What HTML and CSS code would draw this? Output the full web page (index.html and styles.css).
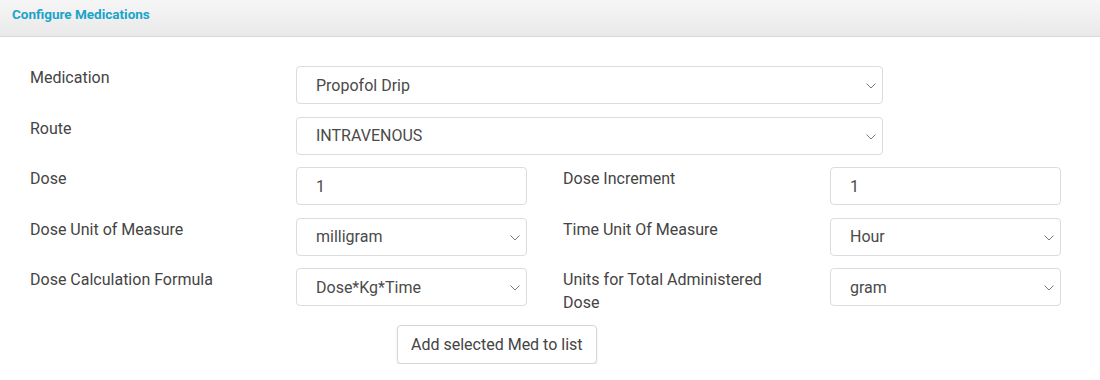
FILE: index.html
```html
<!DOCTYPE html>
<html lang="en">
  <head>
    <meta charset="UTF-8" />
    <meta name="viewport" content="width=device-width, initial-scale=1.0" />
    <title>Configure Medications</title>
    <link rel="stylesheet" href="styles.css">
  </head>
  <body>
    <div class="panel-header">
      <h1>Configure Medications</h1>
    </div>
    <form class="med-form">
      <div class="form-grid">
        <label class="field-label">Medication</label>
        <div class="select-wrap wide">
          <select>
            <option>Propofol Drip</option>
          </select>
          <svg class="chevron" viewBox="0 0 10 6"><path d="M0.5 0.5 L5 5 L9.5 0.5" /></svg>
        </div>

        <label class="field-label">Route</label>
        <div class="select-wrap wide">
          <select>
            <option>INTRAVENOUS</option>
          </select>
          <svg class="chevron" viewBox="0 0 10 6"><path d="M0.5 0.5 L5 5 L9.5 0.5" /></svg>
        </div>

        <label class="field-label">Dose</label>
        <input type="text" value="1" />
        <label class="field-label second">Dose Increment</label>
        <input type="text" value="1" />

        <label class="field-label">Dose Unit of Measure</label>
        <div class="select-wrap">
          <select>
            <option>milligram</option>
          </select>
          <svg class="chevron" viewBox="0 0 10 6"><path d="M0.5 0.5 L5 5 L9.5 0.5" /></svg>
        </div>
        <label class="field-label second">Time Unit Of Measure</label>
        <div class="select-wrap">
          <select>
            <option>Hour</option>
          </select>
          <svg class="chevron" viewBox="0 0 10 6"><path d="M0.5 0.5 L5 5 L9.5 0.5" /></svg>
        </div>

        <label class="field-label">Dose Calculation Formula</label>
        <div class="select-wrap">
          <select>
            <option>Dose*Kg*Time</option>
          </select>
          <svg class="chevron" viewBox="0 0 10 6"><path d="M0.5 0.5 L5 5 L9.5 0.5" /></svg>
        </div>
        <label class="field-label second">Units for Total Administered Dose</label>
        <div class="select-wrap">
          <select>
            <option>gram</option>
          </select>
          <svg class="chevron" viewBox="0 0 10 6"><path d="M0.5 0.5 L5 5 L9.5 0.5" /></svg>
        </div>
      </div>
      <div class="actions">
        <button type="button">Add selected Med to list</button>
      </div>
    </form>
  </body>
</html>
```

FILE: styles.css
```css
body {
  font-family: Roboto, "Liberation Sans", Arial, sans-serif;
  margin: 0;
  padding: 0;
  background-color: #ffffff;
  color: #444444;
}

.panel-header {
  height: 36px;
  background: linear-gradient(#f6f6f6, #e9e9e9);
  border-bottom: 1px solid #d9d9d9;
  padding: 0 12px;
  display: flex;
  align-items: center;
}

.panel-header h1 {
  margin: 0;
  margin-top: -8px;
  font-size: 13.5px;
  font-weight: 700;
  color: #19a4c9;
}

.med-form {
  padding: 29px 0 0 30px;
}

.form-grid {
  display: grid;
  grid-template-columns: 266px 231px 303px 231px;
  grid-auto-rows: 38px;
  row-gap: 12.5px;
}

.field-label {
  font-size: 16px;
  line-height: 23px;
  color: #444444;
}

.field-label.second {
  padding-left: 36px;
  padding-right: 60px;
}

.select-wrap {
  position: relative;
}

.select-wrap.wide {
  grid-column: 2 / 5;
  width: 587px;
}

select,
input {
  box-sizing: border-box;
  width: 100%;
  height: 38px;
  border: 1px solid #dcdcdc;
  border-radius: 4px;
  background: #ffffff;
  font-family: inherit;
  font-size: 16px;
  color: #4a4a4a;
  padding: 0 0 0 19px;
  margin: 0;
  outline: none;
}

select {
  appearance: none;
  -webkit-appearance: none;
}

.chevron {
  position: absolute;
  right: 7px;
  top: 17px;
  width: 10px;
  height: 6px;
  fill: none;
  stroke: #7a7a7a;
  stroke-width: 1;
  pointer-events: none;
}

.actions {
  padding-left: 367px;
  margin-top: 19px;
}

button {
  height: 39px;
  padding: 0 13px;
  font-family: inherit;
  font-size: 16px;
  color: #444444;
  background: #ffffff;
  border: 1px solid #d6d6d6;
  border-radius: 4px;
  box-shadow: 0 1px 2px rgba(0, 0, 0, 0.1);
  cursor: pointer;
}
```
